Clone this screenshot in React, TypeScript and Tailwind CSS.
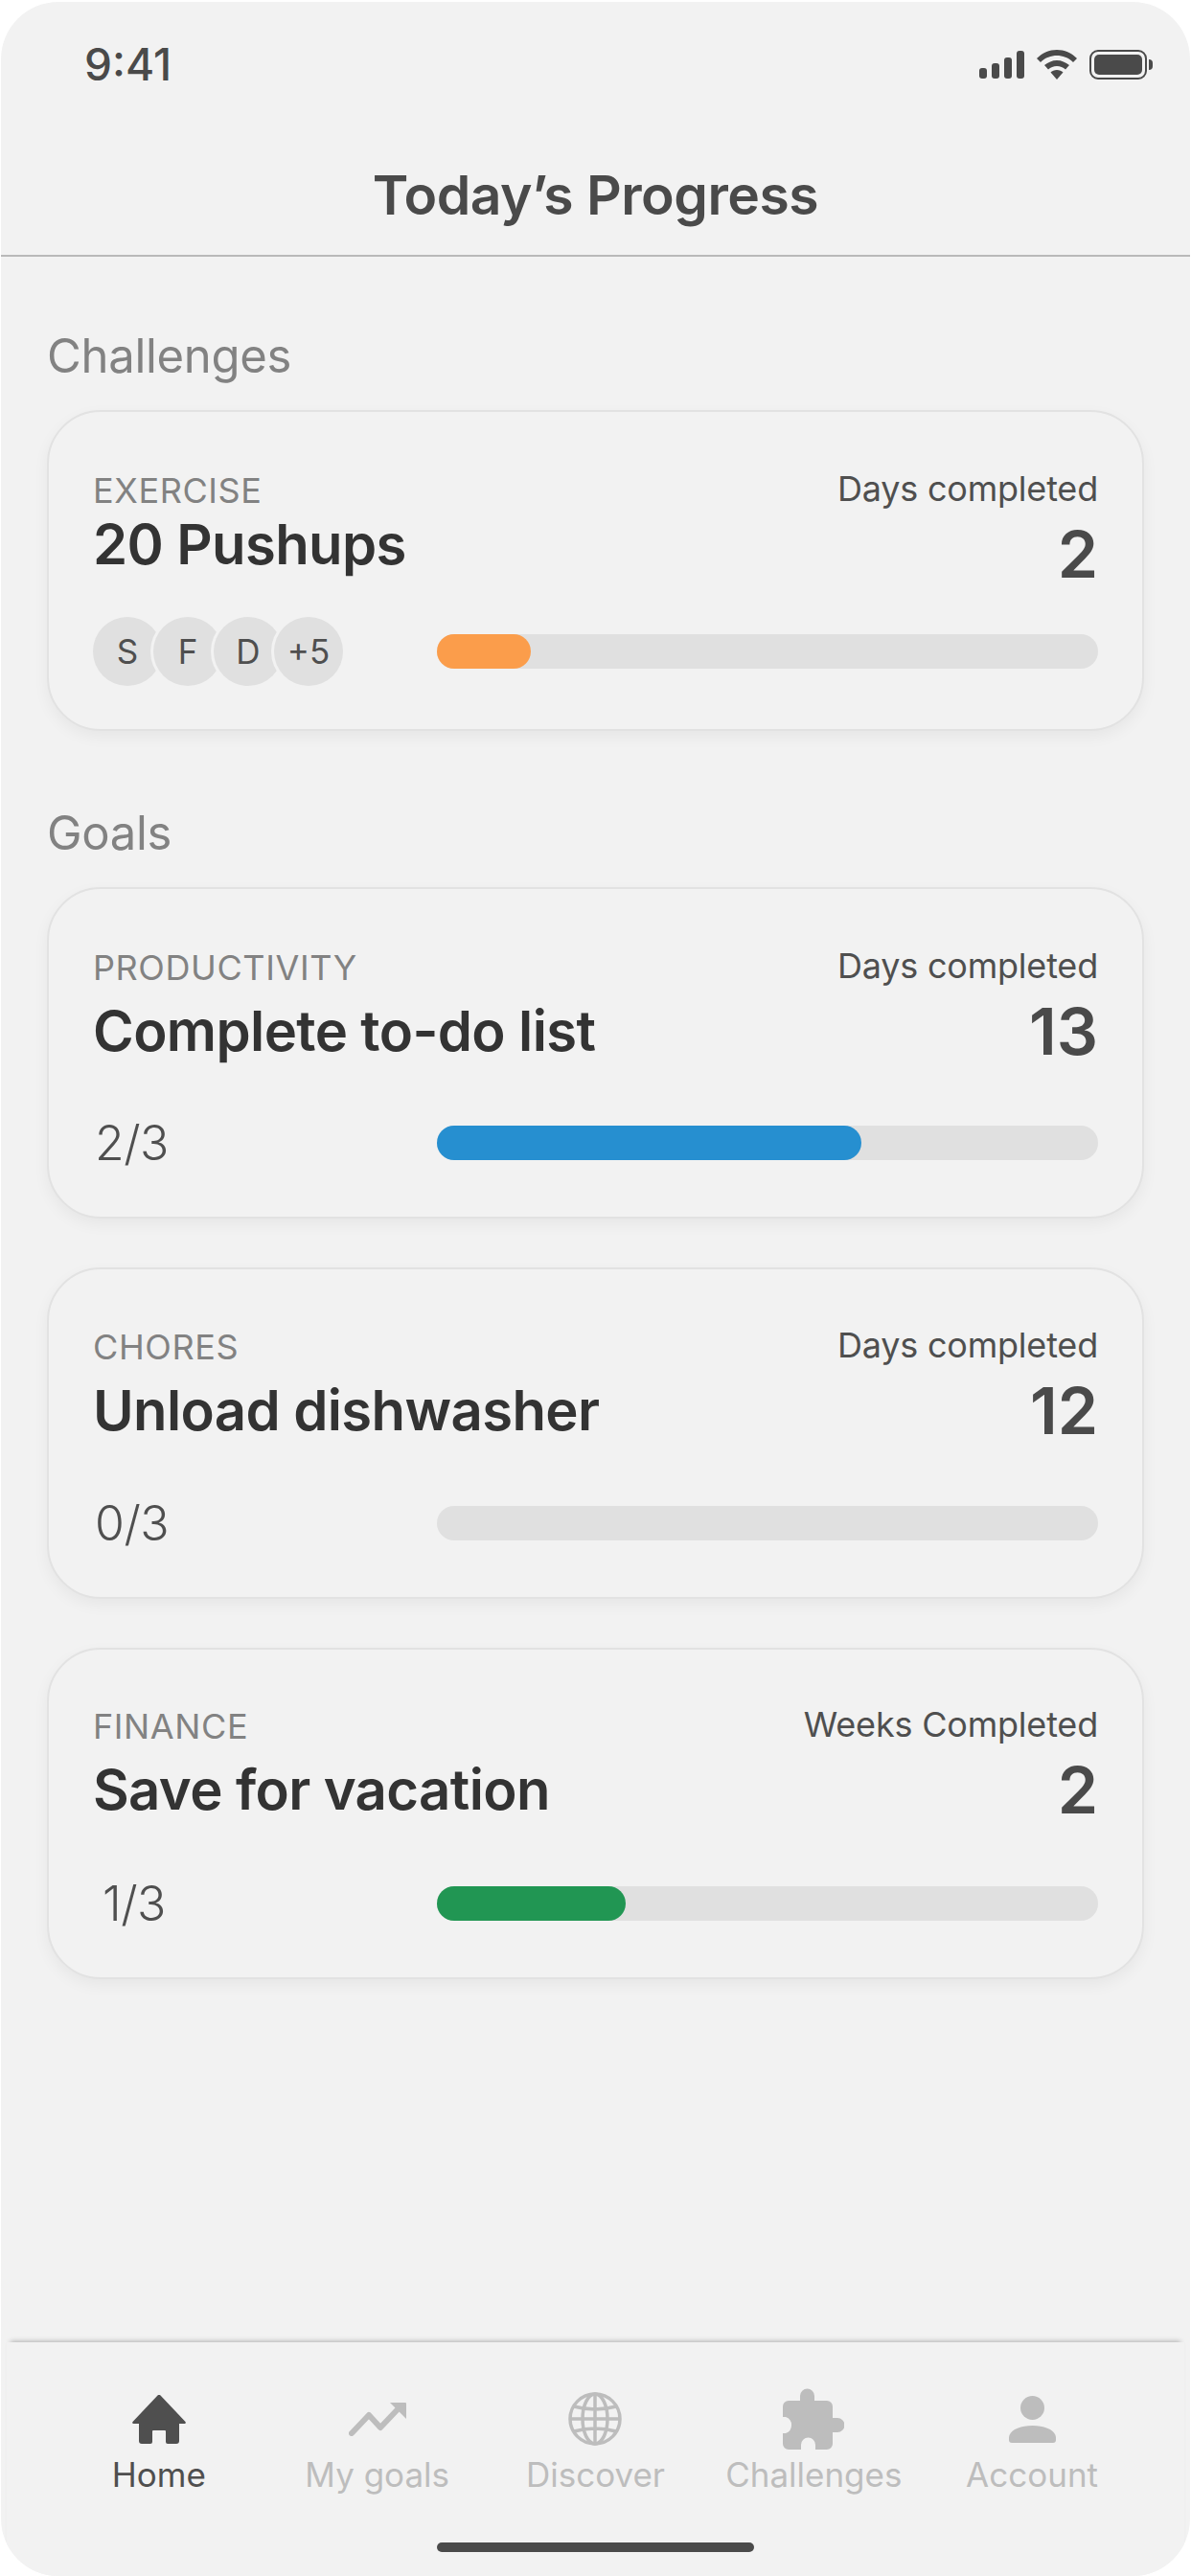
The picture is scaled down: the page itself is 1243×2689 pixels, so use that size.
const Home = () => (
  <svg width="56" height="51" viewBox="0 0 56 51" fill="#4f4f4f">
    <path d="M26.5 0.6 a2 2 0 0 1 3 0 L55.5 28 q1 2 -1 2 H49 V48 a3 3 0 0 1 -3 3 H37 a2 2 0 0 1 -2 -2 V38 q0 -1 -1 -1 H22 q-1 0 -1 1 V49 a2 2 0 0 1 -2 2 H10 a3 3 0 0 1 -3 -3 V30 H1.5 q-2 0 -1 -2 Z" />
  </svg>
);
const Trend = () => (
  <svg width="60" height="35" viewBox="0 0 60 35" fill="none">
    <path d="M3 32 L21 13 L33 26 L52 6" stroke="#bdbdbd" strokeWidth="6" strokeLinecap="round" strokeLinejoin="round" />
    <path d="M43 0 H59 a1 1 0 0 1 1 1 V17 Z" fill="#bdbdbd" />
  </svg>
);
const Globe = () => (
  <svg width="56" height="56" viewBox="0 0 56 56" fill="none" stroke="#bdbdbd" strokeWidth="3.5">
    <circle cx="28" cy="28" r="26" />
    <ellipse cx="28" cy="28" rx="13" ry="26" />
    <path d="M28 2 V54 M2 28 H54 M6 15 Q28 21 50 15 M6 41 Q28 35 50 41" />
  </svg>
);
const Puzzle = () => (
  <svg width="64" height="64" viewBox="0 0 64 64" fill="#bdbdbd">
    <path d="M18 13 V8 a7.500 7.500 0 0 1 15 0 V13 H46 a6 6 0 0 1 6 6 V31 H57 a7.500 7.500 0 0 1 0 15 H52 V58 a6 6 0 0 1 -6 6 H34 V59 a7.500 7.500 0 0 0 -15 0 V64 H6 a6 6 0 0 1 -6 -6 V47 H3 a9 9 0 0 0 0 -17 H0 V19 a6 6 0 0 1 6 -6 Z" />
  </svg>
);
const Person = () => (
  <svg width="49" height="49" viewBox="0 0 49 49" fill="#bdbdbd">
    <ellipse cx="24.500" cy="12.500" rx="12.500" ry="12.500" />
    <path d="M0 44 C0 36 11 31 24.500 31 C38 31 49 36 49 44 V46 a3 3 0 0 1 -3 3 H3 a3 3 0 0 1 -3 -3 Z" />
  </svg>
);

const Signal = () => (
  <svg width="47" height="29" viewBox="0 0 47 29" fill="#4a4a4a">
    <rect x="0" y="18" width="8" height="11" rx="3" />
    <rect x="13" y="13" width="8" height="16" rx="3" />
    <rect x="26" y="7" width="8" height="22" rx="3" />
    <rect x="39" y="0" width="8" height="29" rx="3" />
  </svg>
);
const Wifi = () => (
  <svg width="42" height="31" viewBox="0 0 42 31" fill="#4a4a4a">
    <path d="M21 0 C29 0 36 3 42 9 L38 13 C33 8 27 6 21 6 C15 6 9 8 4 13 L0 9 C6 3 13 0 21 0 Z" />
    <path d="M21 11 C26 11 30 13 34 16 L30 20.500 C27.500 18.500 24.500 17 21 17 C17.500 17 14.500 18.500 12 20.500 L8 16 C12 13 16 11 21 11 Z" />
    <path d="M21 21 C23.500 21 26 22 27.500 23.500 L21 31 L14.500 23.500 C16 22 18.500 21 21 21 Z" />
  </svg>
);
const Battery = () => (
  <div className="flex items-center">
    <div className="w-[60px] h-[31px] rounded-[9px] border-[2px] border-[#4a4a4a] p-[3px]">
      <div className="w-full h-full rounded-[5px] bg-[#4a4a4a]" />
    </div>
    <div className="w-[4px] h-[11px] ml-[2px] rounded-r-[4px] bg-[#4a4a4a]" />
  </div>
);

const Bar = ({ fill, color }: { fill: number; color: string }) => (
  <div className="w-[690px] h-[36px] rounded-[18px] bg-[#e0e0e0] shrink-0">
    {fill > 0 && <div className="h-full rounded-[18px]" style={{ width: fill, backgroundColor: color }} />}
  </div>
);

const Top = ({ cat, title, metric, value, titleGap }: { cat: string; title: string; metric: string; value: string; titleGap: string }) => (
  <div className="flex justify-between items-start">
    <div className="flex flex-col">
      <div className="text-[36px] leading-[40px] text-[#828282] tracking-[0.6px]">{cat}</div>
      <div className={`text-[58px] leading-[68px] font-semibold text-[#333333] tracking-[-0.6px] ${titleGap}`}>{title}</div>
    </div>
    <div className="flex flex-col items-end">
      <div className="text-[36px] leading-[40px] text-[#4f4f4f] -mt-[2px] tracking-[-0.2px]">{metric}</div>
      <div className="text-[68px] leading-[68px] font-semibold text-[#4a4a4a] mt-[14px]">{value}</div>
    </div>
  </div>
);

const Chip = ({ t, first }: { t: string; first?: boolean }) => (
  <div className={`w-[72px] h-[72px] rounded-full bg-[#e0e0e0] flex items-center justify-center text-[35px] text-[#4f4f4f] ${first ? "" : "-ml-[9px] ring-[3px] ring-[#f2f2f2]"}`}>
    {t}
  </div>
);

const Goal = ({ cat, title, metric, value, frac, fill, color, fracPad, pt, barGap }: { cat: string; title: string; metric: string; value: string; frac: string; fill: number; color: string; fracPad: string; pt: string; barGap: string }) => (
  <div className={`rounded-[56px] border-[2px] border-[#e2e2e2] bg-[#f2f2f2] shadow-[0_6px_16px_rgba(0,0,0,0.05)] pl-[46px] pr-[46px] h-[346px] ${pt}`}>
    <Top cat={cat} title={title} metric={metric} value={value} titleGap="mt-[12px]" />
    <div className={`flex items-center justify-between h-[50px] ${barGap}`}>
      <div className={`text-[50px] font-light text-[#4f4f4f] tracking-[-0.5px] ${fracPad}`}>{frac}</div>
      <Bar fill={fill} color={color} />
    </div>
  </div>
);

const Nav = ({ icon, label, active }: { icon: React.ReactNode; label: string; active?: boolean }) => (
  <div className="flex flex-col items-center">
    <div className="h-[64px] flex items-center justify-center">{icon}</div>
    <div className={`text-[35px] leading-[40px] mt-[6px] ${active ? "text-[#4f4f4f]" : "text-[#bdbdbd]"}`}>{label}</div>
  </div>
);

export default function App() {
  return (
    <div className="bg-white px-px pt-[2px] w-[1243px] h-[2689px] font-['Inter',sans-serif]">
      <div className="h-full rounded-[60px] bg-[#f2f2f2] flex flex-col overflow-hidden">
        <div className="flex items-center justify-between pl-[87px] pr-[39px] pt-[40px] h-[90px] shrink-0">
          <div className="text-[46px] leading-[44px] font-medium text-[#4a4a4a]">9:41</div>
          <div className="flex items-center gap-[13px]">
            <Signal />
            <Wifi />
            <Battery />
          </div>
        </div>
        <div className="h-[176px] shrink-0 flex items-center justify-center border-b-[2px] border-[#b9b9b9] pt-[50px]">
          <div className="text-[57px] font-semibold text-[#4a4a4a] tracking-[-0.5px]">Today’s Progress</div>
        </div>
        <div className="px-[48px] flex-1">
          <div className="text-[49px] leading-[60px] text-[#828282] mt-[74px] tracking-[-0.3px]">Challenges</div>
          <div className="rounded-[56px] border-[2px] border-[#e2e2e2] bg-[#f2f2f2] shadow-[0_6px_16px_rgba(0,0,0,0.05)] pl-[46px] pr-[46px] pt-[62px] h-[335px] mt-[26px]">
            <Top cat="EXERCISE" title="20 Pushups" metric="Days completed" value="2" titleGap="mt-[2px]" />
            <div className="flex items-center justify-between mt-[32px]">
              <div className="flex">
                <Chip t="S" first />
                <Chip t="F" />
                <Chip t="D" />
                <Chip t="+5" />
              </div>
              <Bar fill={98} color="#fb9d4b" />
            </div>
          </div>
          <div className="text-[49px] leading-[60px] text-[#828282] mt-[77px] tracking-[-0.3px]">Goals</div>
          <div className="flex flex-col gap-[51px] mt-[26px]">
            <Goal cat="PRODUCTIVITY" title="Complete to-do list" metric="Days completed" value="13" frac="2/3" fill={443} color="#268fd0" fracPad="pl-[2px]" pt="pt-[62px]" barGap="mt-[58px]" />
            <Goal cat="CHORES" title="Unload dishwasher" metric="Days completed" value="12" frac="0/3" fill={0} color="#e0e0e0" fracPad="pl-[2px]" pt="pt-[61px]" barGap="mt-[59px]" />
            <Goal cat="FINANCE" title="Save for vacation" metric="Weeks Completed" value="2" frac="1/3" fill={197} color="#219653" fracPad="pl-[10px]" pt="pt-[60px]" barGap="mt-[60px]" />
          </div>
        </div>
        <div className="shrink-0 h-[244px] shadow-[0_-5px_5px_-4px_rgba(0,0,0,0.28)] bg-[#f2f2f2] flex flex-col mx-[6px]">
          <div className="grid grid-cols-5 px-[45px] pt-[48px]">
            <Nav icon={<Home />} label="Home" active />
            <Nav icon={<Trend />} label="My goals" />
            <Nav icon={<Globe />} label="Discover" />
            <Nav icon={<Puzzle />} label="Challenges" />
            <Nav icon={<Person />} label="Account" />
          </div>
          <div className="w-[331px] h-[10px] rounded-[5px] bg-[#4a4a4a] mx-auto mt-[51px]" />
        </div>
      </div>
    </div>
  );
}
